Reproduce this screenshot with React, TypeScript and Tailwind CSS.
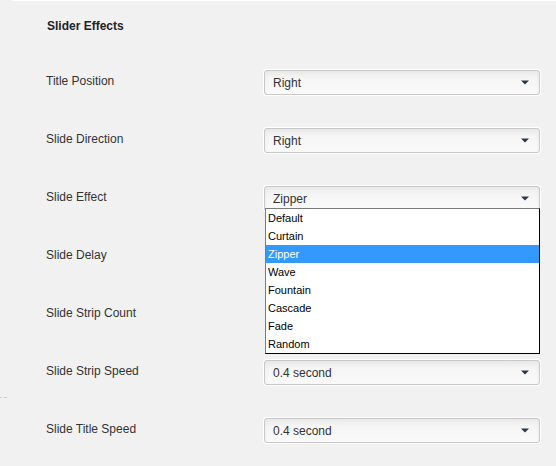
const rows = [
  { label: 'Title Position', value: 'Right' },
  { label: 'Slide Direction', value: 'Right' },
  { label: 'Slide Effect', value: 'Zipper', open: true },
  { label: 'Slide Delay', value: '' },
  { label: 'Slide Strip Count', value: '' },
  { label: 'Slide Strip Speed', value: '0.4 second' },
  { label: 'Slide Title Speed', value: '0.4 second' },
]

const effects = ['Default', 'Curtain', 'Zipper', 'Wave', 'Fountain', 'Cascade', 'Fade', 'Random']

function Select({ value }: { value: string }) {
  return (
    <div className="flex h-[25px] w-[276px] items-center justify-between rounded-[3px] border border-[#c8c8c8] bg-gradient-to-b from-[#f3f3f3] to-[#fafafa] pl-[8px] pr-[10px] text-[12px] text-[#333] shadow-[inset_0_3px_5px_rgba(0,0,0,0.05),0_0_0_1px_#fff]">
      <span>{value}</span>
      <svg width="8" height="5" viewBox="0 0 8 5">
        <path d="M0 0.5h8L4 4.5z" fill="#2c3546" />
      </svg>
    </div>
  )
}

export default function App() {
  return (
    <div className="relative h-[466px] w-[556px] overflow-hidden bg-[#f1f1f1] font-['Liberation_Sans',Arial,sans-serif] text-[#333]">
      <div className="ml-[12px] h-px bg-white" />
      <div className="absolute left-0 top-[397px] flex gap-[2px]">
        <div className="h-px w-[2px] bg-[#d0d0d0]" />
        <div className="h-px w-[3px] bg-[#d0d0d0]" />
      </div>

      <div className="pl-[46px]">
        <h3 className="pl-px pt-[17px] text-[12px] font-bold leading-[16px] text-[#222]">Slider Effects</h3>

        <div className="mt-[36px]">
          {rows.map((row) => (
            <div key={row.label} className="relative flex h-[58px] items-start">
              <div className="w-[218px] pt-[3px] text-[12px] leading-[16px]">{row.label}</div>
              {row.value && <Select value={row.value} />}
              {row.open && (
                <ul className="absolute left-[219px] top-[22px] z-10 w-[275px] border border-[#7a7a7a] border-r-black border-b-black bg-white text-[11px] leading-[18px] text-black">
                  {effects.map((e) => (
                    <li
                      key={e}
                      className={e === 'Zipper' ? 'bg-[#3399ff] pl-[2px] text-white' : 'pl-[2px]'}
                    >
                      {e}
                    </li>
                  ))}
                </ul>
              )}
            </div>
          ))}
        </div>
      </div>
    </div>
  )
}
